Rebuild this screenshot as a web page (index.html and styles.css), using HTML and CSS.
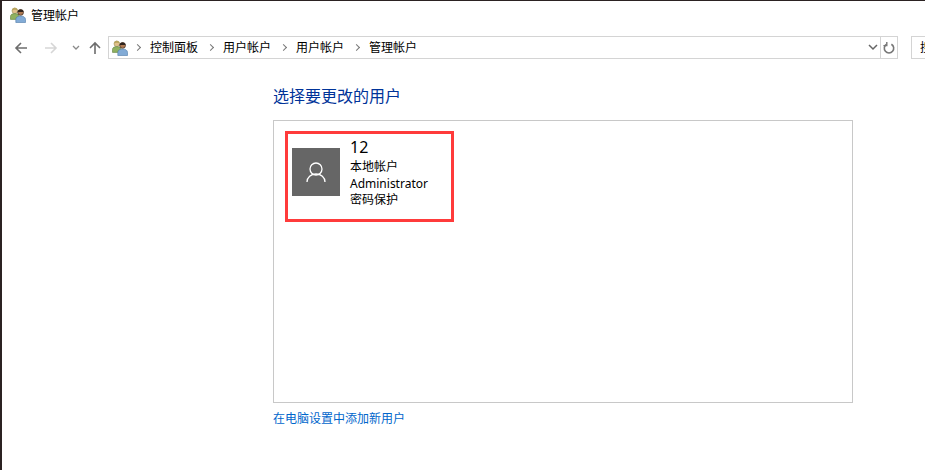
FILE: index.html
```html
<!DOCTYPE html>
<html lang="zh-CN">
<head>
<meta charset="utf-8">
<title>管理帐户</title>
<link rel="stylesheet" href="styles.css">
</head>
<body>
<svg class="defs" width="0" height="0" aria-hidden="true">
  <symbol id="users" viewBox="0 0 16 16">
    <circle cx="4.800" cy="3.800" r="2.800" fill="#e0c08c" stroke="#9a9058" stroke-width=".6"/>
    <path d="M2 3.600C2.400 1.600 3.600.8 4.800.8s2.600.8 2.900 2.800C6 2.400 3.800 2.400 2 3.600z" fill="#b9a45c"/>
    <path d="M.5 12.400V9.400C.5 7.600 2.200 6.600 4.800 6.600s4.200 1 4.200 2.800v3z" fill="#8fb160" stroke="#5f7d3c" stroke-width=".6"/>
    <circle cx="10.600" cy="5.400" r="2.900" fill="#b07a52" stroke="#3a2a20" stroke-width=".7"/>
    <path d="M10.600 2.400c-1.900 0-3 1.300-2.900 2.900 1.600-.4 4.200-.5 5.800-.2 0-1.500-1-2.700-2.900-2.700z" fill="#2f231c"/>
    <path d="M5.800 15.500V12.400c0-2.100 1.900-3.400 4.800-3.400s4.900 1.300 4.900 3.400v3.100z" fill="#82abd6" stroke="#4d7aa8" stroke-width=".6"/>
  </symbol>
</svg>
<div class="window">
  <header class="titlebar">
    <svg class="icon16"><use href="#users"/></svg>
    <span class="title">管理帐户</span>
  </header>
  <nav class="toolbar">
    <div class="navbtns">
      <svg class="nav-arrow" viewBox="0 0 14 14"><path d="M13 7H2M7 2 2 7l5 5" fill="none" stroke="#6d6d6d" stroke-width="1.600"/></svg>
      <svg class="nav-arrow" viewBox="0 0 14 14"><path d="M1 7h11M7 2l5 5-5 5" fill="none" stroke="#d6d6d6" stroke-width="1.600"/></svg>
      <svg class="nav-drop" viewBox="0 0 8 6"><path d="M1 1l3 3 3-3" fill="none" stroke="#8a8a8a" stroke-width="1.300"/></svg>
      <svg class="nav-up" viewBox="0 0 14 14"><path d="M7 13V2M2 7l5-5 5 5" fill="none" stroke="#6d6d6d" stroke-width="1.600"/></svg>
    </div>
    <div class="address">
      <svg class="icon16"><use href="#users"/></svg>
      <ol class="crumbs">
        <li>控制面板</li>
        <li>用户帐户</li>
        <li>用户帐户</li>
        <li>管理帐户</li>
      </ol>
      <svg class="addr-drop" viewBox="0 0 10 7"><path d="M1 1l4 4 4-4" fill="none" stroke="#666" stroke-width="1.500"/></svg>
      <span class="addr-refresh">
        <svg viewBox="0 0 12 12" width="12" height="12"><path d="M3.600 2.200A4.700 4.700 0 1 0 8.400 2.200" fill="none" stroke="#777" stroke-width="1.600"/><path d="M3.800 0v3.600H.4" fill="none" stroke="#777" stroke-width="1.400"/></svg>
      </span>
    </div>
    <div class="search"><span>搜</span></div>
  </nav>
  <main class="content">
    <h1 class="heading">选择要更改的用户</h1>
    <section class="panel">
      <div class="account">
        <div class="avatar">
          <svg viewBox="0 0 24 24" width="24" height="24"><circle cx="12" cy="9" r="6" fill="none" stroke="#fff" stroke-width="1.300"/><path d="M3 22c0-4.800 4-8 9-8s9 3.200 9 8" fill="none" stroke="#fff" stroke-width="1.300"/></svg>
        </div>
        <div class="details">
          <div class="name">12</div>
          <div class="line">本地帐户</div>
          <div class="line">Administrator</div>
          <div class="line">密码保护</div>
        </div>
      </div>
    </section>
    <a class="link" href="#">在电脑设置中添加新用户</a>
  </main>
</div>
</body>
</html>
```
FILE: styles.css
```css
* { box-sizing: border-box; }
html, body { margin: 0; padding: 0; height: 100%; overflow: hidden; background: #fff; }
body { font-family: "Noto Sans", "Noto Sans CJK SC", sans-serif; font-size: 12px; color: #000; }
.defs { display: block; height: 0; }
.window { height: 470px; border-top: 1px solid #2b2222; border-left: 2px solid #2b2222; }
.icon16 { width: 16px; height: 16px; flex: none; }
.titlebar { display: flex; align-items: center; height: 28px; padding: 0 0 0 8px; }
.title { margin: 2px 0 0 5px; line-height: 16px; }
.toolbar { display: flex; align-items: flex-start; height: 30px; padding-top: 7px; }
.navbtns { display: flex; align-items: center; width: 106px; height: 23px; padding-left: 12px; }
.nav-arrow { width: 14px; height: 14px; margin-right: 16px; }
.nav-drop { width: 8px; height: 6px; margin-left: -2px; margin-right: 8px; }
.nav-up { width: 14px; height: 14px; }
.address { display: flex; align-items: center; width: 791px; height: 23px; border: 1px solid #d4d4d4; padding-left: 3px; }
.crumbs { display: flex; list-style: none; margin: 0; padding: 0; flex: 1; }
.crumbs li { line-height: 20px; margin-left: 25px; position: relative; }
.crumbs li:first-child { margin-left: 22px; }
.crumbs li::before { content: ""; position: absolute; left: -15px; top: 7px; width: 4px; height: 4px; border-top: 1.500px solid #777; border-right: 1.500px solid #777; transform: rotate(45deg); }
.addr-drop { width: 10px; height: 7px; margin-right: 2px; }
.addr-refresh { display: flex; align-items: center; justify-content: center; width: 17px; height: 21px; border-left: 1px solid #d4d4d4; }
.search { width: 14px; height: 23px; margin-left: 13px; border: 1px solid #d4d4d4; border-right: 0; overflow: hidden; line-height: 21px; padding-left: 8px; white-space: nowrap; }
.content { padding-left: 271px; }
.heading { margin: 25px 0 0; font-size: 16px; font-weight: 400; line-height: 24px; color: #003399; }
.panel { width: 580px; height: 283px; margin-top: 12px; border: 1px solid #c8c8c8; padding: 10px 0 0 11px; }
.account { display: flex; width: 169px; height: 91px; border: 3px solid #ff3b3b; padding: 0 0 0 4px; }
.avatar { display: flex; align-items: center; justify-content: center; width: 48px; height: 48px; margin-top: 14px; background: #666; flex: none; }
.details { margin-left: 10px; }
.name { font-size: 16px; line-height: 20px; margin: 3px 0 1px; }
.line { line-height: 17px; }
.line:last-child { line-height: 16px; }
.link { display: inline-block; margin-top: 8px; color: #0066cc; text-decoration: none; line-height: 16px; }
```
